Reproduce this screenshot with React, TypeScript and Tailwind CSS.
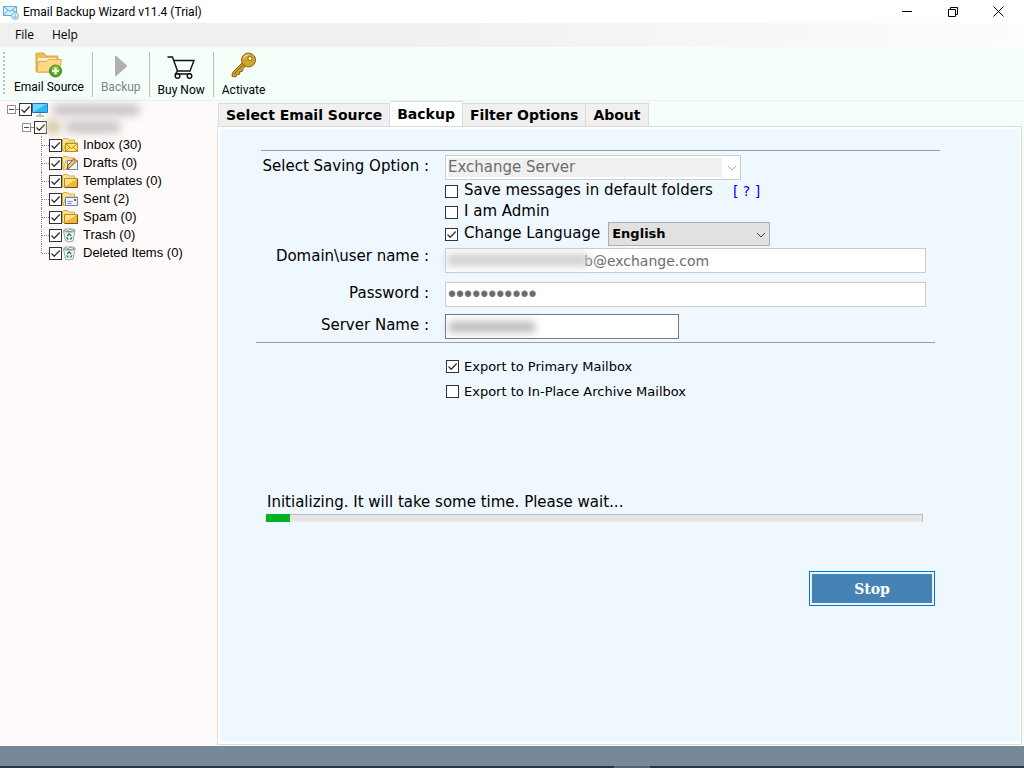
import { useState } from 'react';
import type { ReactNode } from 'react';

type FolderKind = 'inbox' | 'drafts' | 'folder' | 'sent' | 'trash';

const FOLDERS: { name: string; count: number; kind: FolderKind }[] = [
  { name: 'Inbox', count: 30, kind: 'inbox' },
  { name: 'Drafts', count: 0, kind: 'drafts' },
  { name: 'Templates', count: 0, kind: 'folder' },
  { name: 'Sent', count: 2, kind: 'sent' },
  { name: 'Spam', count: 0, kind: 'folder' },
  { name: 'Trash', count: 0, kind: 'trash' },
  { name: 'Deleted Items', count: 0, kind: 'trash' },
];

const TABS = ['Select Email Source', 'Backup', 'Filter Options', 'About'];

interface CheckProps {
  id: string;
  label?: string;
  checked?: boolean;
}

function Check({ id, label, checked = false }: CheckProps) {
  return (
    <span className="relative block size-[13px] shrink-0">
      <input
        id={id}
        type="checkbox"
        aria-label={label}
        defaultChecked={checked}
        className="peer block size-[13px] appearance-none border border-[#333] bg-white"
      />
      <svg
        viewBox="0 0 13 13"
        className="pointer-events-none invisible absolute inset-0 size-[13px] peer-checked:visible"
        fill="none"
        stroke="#333"
        strokeWidth="1.3"
      >
        <path d="M2.5 6.5 5.2 9.2 10.7 3.5" />
      </svg>
    </span>
  );
}

function AppIcon() {
  return (
    <svg width="16" height="16" viewBox="0 0 16 16" fill="none" stroke="#5aaee0">
      <path d="M.5 2.5h13v9H.5z" fill="#d8effb" />
      <path d="m.5 2.5 6.5 5 6.5-5M.5 11.5 5 6M13.5 8.5 9 6" />
      <circle cx="12" cy="12" r="3.4" fill="#fff" />
      <path d="M12 10v4m-1.7-1.7L12 14l1.7-1.7" />
    </svg>
  );
}

function SourceIcon() {
  return (
    <svg width="28" height="26" viewBox="0 0 28 26">
      <path d="M1 2q0-1 1-1h7l2 3h11q1 0 1 1v15H2q-1 0-1-1z" fill="#efbd57" stroke="#d9a441" />
      <path d="M3 6h18v3H3z" fill="#fff1c9" />
      <path d="M2 20 3.5 9.5h8l2-2h13L24 20z" fill="#ffd98a" stroke="#e0aa4a" />
      <circle cx="20.5" cy="19" r="6" fill="#57a51c" stroke="#3f8410" />
      <circle cx="20.5" cy="17.5" r="4" fill="#7cc63b" />
      <path d="M20.5 15.5v7M17 19h7" stroke="#fff" strokeWidth="2.2" />
    </svg>
  );
}

function PlayIcon() {
  return (
    <svg width="14" height="22" viewBox="0 0 14 22">
      <path d="M1 1.5Q1 0 2.5 1.2L12.5 10q1 1 0 2L2.5 20.8Q1 22 1 20.5z" fill="#b0b0b0" />
    </svg>
  );
}

function CartIcon() {
  return (
    <svg width="28" height="26" viewBox="0 0 28 26" fill="none" stroke="#111" strokeWidth="1.4">
      <path d="M.5 3h5l5 14h12.5l4-10.500H7" />
      <path d="m10.500 17-2 3h15" />
      <circle cx="10.500" cy="22" r="2.300" fill="#f5fffa" />
      <circle cx="22.500" cy="22" r="2.300" fill="#f5fffa" />
    </svg>
  );
}

function KeyIcon() {
  return (
    <svg width="26" height="26" viewBox="0 0 26 26">
      <path
        d="M11.5 10.5 1.5 20.5 1 24.5l4 .3 1-2.3 2.5-.3.5-2.5 2.5-.5.5-2.5 3-3z"
        fill="#c9a227"
        stroke="#8a6414"
      />
      <circle cx="17.5" cy="8" r="7" fill="#d0a62b" stroke="#8a6414" />
      <path d="M12.5 6.5a5.5 5.5 0 0 1 5-3.5" fill="none" stroke="#f0d774" strokeWidth="1.5" />
      <path d="m3 22 9.5-9.5" stroke="#8a6414" />
      <circle cx="19" cy="6.5" r="2" fill="#f5fffa" stroke="#8a6414" />
    </svg>
  );
}

function FolderIcon({ kind }: { kind: FolderKind }) {
  if (kind === 'trash') {
    return (
      <svg width="16" height="16" viewBox="0 0 16 16">
        <path d="m1.5 4 2 10q3.500 2 7.500 0L13 4z" fill="#eef3f7" stroke="#9aa6b2" />
        <ellipse cx="7.300" cy="3.500" rx="6" ry="2" fill="#8996a1" stroke="#b9c3cb" />
        <path d="M3.500 3.500 6 2.500l2 1 3-.5" fill="none" stroke="#fff" />
        <path d="m5.200 9 2-2.200 2 2.200M10 10.200 9 12H7.700M4.700 10.200 5.500 12h1" fill="none" stroke="#16822b" strokeWidth="1.200" />
      </svg>
    );
  }
  const light = kind !== 'folder';
  return (
    <svg width="16" height="16" viewBox="0 0 16 16">
      <path d="M.5 13.5V3l1-1.500h4L7 3h5.500v10.500z" fill="#fbe38d" stroke="#d3ac47" />
      {light ? (
        <path d="M1 14.500 4 6h11.500v8.500z" fill="#ffe9a0" stroke="#d9b14d" />
      ) : (
        <g>
          <path d="M2.500 5.500h13v9h-13z" fill="#f0b838" stroke="#c08a22" />
          <path d="M3 6h12L3 13z" fill="#ffe187" />
          <path d="M15.500 6v8.500H3" fill="none" stroke="#7a5210" />
        </g>
      )}
      {kind === 'inbox' && (
        <g stroke="#bd8b20">
          <path d="M3.500 6.500h12v8h-12z" fill="#ffe56e" />
          <path d="m3.500 6.500 6 5 6-5M3.500 14.500 8 10M15.500 14.500 11 10" fill="none" />
        </g>
      )}
      {kind === 'sent' && (
        <g>
          <path d="M3.500 6.500h12v8h-12z" fill="#eff5ff" stroke="#6c83bd" />
          <path d="M5.500 10.500h5M5.500 12.500h4" stroke="#7590cc" />
          <path d="M12 8h2v2h-2z" fill="#d93a2b" />
        </g>
      )}
      {kind === 'drafts' && (
        <g>
          <path d="M5.500 5.500h10v9h-10z" fill="#eff5ff" stroke="#6c83bd" />
          <path d="m5 14 1-4 6-6.500 2.500 2.500-6.500 6.500z" fill="#ffc94d" stroke="#333" strokeWidth=".8" />
          <path d="m11 4.500 1.500-1.500 2.500 2.500L13.500 7z" fill="#e8734f" />
        </g>
      )}
    </svg>
  );
}

function MonitorIcon() {
  return (
    <svg width="16" height="16" viewBox="0 0 16 16" className="shrink-0">
      <path d="M.5 1.5h15v9H.5z" fill="#2bb8f5" stroke="#2573b5" />
      <path d="M1 2h13L2 10H1z" fill="#74d5fc" />
      <path d="M8 11v2.5M4 14h8" stroke="#7893a5" />
    </svg>
  );
}

function Expander({ label }: { label: string }) {
  return (
    <button
      type="button"
      aria-label={label}
      aria-expanded="true"
      className="flex size-[9px] shrink-0 items-center justify-center border border-[#919191] bg-white"
    >
      <span className="h-px w-[5px] bg-[#334c99]" />
    </button>
  );
}

interface ToolProps {
  icon: ReactNode;
  label: string;
  disabled?: boolean;
}

function Tool({ icon, label, disabled }: ToolProps) {
  return (
    <button
      type="button"
      disabled={disabled}
      className="flex flex-col items-center justify-between whitespace-nowrap text-black disabled:text-[#838383]"
    >
      {icon}
      <span className="leading-4">{label}</span>
    </button>
  );
}

function ToolSeparator() {
  return <div className="h-[45px] w-px shrink-0 bg-[#bdbdbd]" />;
}

function TitleBar() {
  return (
    <header className="flex h-[23px] items-center bg-white pl-[3px] font-['Roboto','Open_Sans',sans-serif] text-xs">
      <AppIcon />
      <h1 className="ml-1 flex-1">Email Backup Wizard v11.4 (Trial)</h1>
      <div className="flex h-full items-center pr-[3px]">
        <button type="button" aria-label="Minimize" className="flex h-full w-[46px] items-center justify-center">
          <svg width="10" height="10" viewBox="0 0 10 10" stroke="#000">
            <path d="M0 4.5h10" />
          </svg>
        </button>
        <button type="button" aria-label="Restore" className="flex h-full w-[45px] items-center justify-center">
          <svg width="10" height="10" viewBox="0 0 10 10" fill="none" stroke="#000">
            <path d="M.5 2.5h7v7h-7zM2.5 2.5v-2h7v7h-2" />
          </svg>
        </button>
        <button type="button" aria-label="Close" className="flex h-full w-[46px] items-center justify-center">
          <svg width="11" height="11" viewBox="0 0 11 11" stroke="#000">
            <path d="m.5.5 10 10m0-10-10 10" />
          </svg>
        </button>
      </div>
    </header>
  );
}

function FolderTree() {
  return (
    <aside className="w-[217px] shrink-0 bg-[#fffafa] font-['Liberation_Sans',Arial,sans-serif] text-[13px] text-black">
      <div className="flex h-[17px] items-center pl-[7px]">
        <Expander label="Collapse computer" />
        <span className="mr-px w-[2px] border-t border-dotted border-[#888]" />
        <Check id="root" label="Computer" checked />
        <MonitorIcon />
        <span className="ml-1 h-3 w-[88px] rounded-full bg-[#c9c5c5] blur-[4px]" />
      </div>
      <div className="flex h-[18px] items-center pl-[22px]">
        <Expander label="Collapse mailbox" />
        <span className="mr-px w-[2px] border-t border-dotted border-[#888]" />
        <Check id="mailbox" label="Mailbox" checked />
        <span className="-ml-0.5 size-4 rounded-full bg-[#d5cba8] blur-[4px]" />
        <span className="ml-1 h-3 w-[56px] rounded-full bg-[#c9c5c5] blur-[4px]" />
      </div>
      <ul className="ml-[41px]">
        {FOLDERS.map(({ name, count, kind }) => (
          <li key={name} className="group flex h-[18px] items-center">
            <span className="h-full border-l border-dotted border-[#888] group-last:h-[9px] group-last:self-start" />
            <span className="w-[7px] border-t border-dotted border-[#888]" />
            <Check id={name} checked />
            <FolderIcon kind={kind} />
            <label htmlFor={name} className="pl-[5px]">{name} ({count})</label>
          </li>
        ))}
      </ul>
    </aside>
  );
}

function BackupForm() {
  const [language, setLanguage] = useState('English');

  return (
    <form
      className="flex-1 bg-[#eff7ff] pt-[21px] pr-[79px] pl-9 text-[15px] text-black"
      onSubmit={e => e.preventDefault()}
    >
      <hr className="ml-[5px] border-[#9a9fa5]" />
      <div className="mr-[14px] grid grid-cols-[173px_1fr] gap-x-4 pt-1">
        <label htmlFor="saving" className="pt-px text-right leading-5">Select Saving Option :</label>
        <div className="relative w-[296px]">
          <select
            id="saving"
            disabled
            className="block h-[25px] w-full appearance-none border border-[#ccc] bg-white bg-linear-to-r from-[#f0f0f0] from-94% to-white to-94% pl-0.5 text-[#6d6d6d] opacity-100 shadow-[inset_0_0_0_2px_white]"
          >
            <option>Exchange Server</option>
          </select>
          <svg width="10" height="6" viewBox="0 0 10 6" fill="none" stroke="#aaa" className="pointer-events-none absolute top-2.5 right-1">
            <path d="m1 1 4 4 4-4" />
          </svg>
        </div>

        <div className="col-start-2 flex h-[22px] items-center">
          <Check id="default-folders" />
          <label htmlFor="default-folders" className="pl-1.5">Save messages in default folders</label>
          <a href="#help" className="ml-5 text-sm text-[#0000ff]">[ ? ]</a>
        </div>
        <div className="col-start-2 flex h-5 items-center">
          <Check id="admin" />
          <label htmlFor="admin" className="pl-1.5">I am Admin</label>
        </div>
        <div className="col-start-2 flex h-6 items-center">
          <Check id="change-language" checked />
          <label htmlFor="change-language" className="pl-1.5">Change Language</label>
          <div className="relative ml-2 w-[162px]">
            <select
              aria-label="Language"
              value={language}
              onChange={e => setLanguage(e.target.value)}
              className="block h-6 w-full appearance-none border border-[#adadad] bg-[#e1e1e1] pl-[3px] text-[13px] font-bold"
            >
              <option>English</option>
              <option>German</option>
            </select>
            <svg width="10" height="6" viewBox="0 0 10 6" fill="none" stroke="#444" className="pointer-events-none absolute top-2.5 right-1">
              <path d="m1 1 4 4 4-4" />
            </svg>
          </div>
        </div>

        <label htmlFor="user" className="text-right leading-5">Domain\user name :</label>
        <div className="relative mt-0.5">
          <input
            id="user"
            type="text"
            readOnly
            defaultValue="b@exchange.com"
            className="block h-[25px] w-full border border-[#ccc] bg-white pl-[138px] text-sm text-[#6d6d6d]"
          />
          <span className="absolute top-1.5 left-0.5 h-3 w-[142px] bg-[#cfcfcf] blur-[4px]" />
        </div>

        <label htmlFor="password" className="mt-2.5 text-right leading-5">Password :</label>
        <input
          id="password"
          type="password"
          readOnly
          defaultValue="backup12345"
          className="mt-[9px] h-[25px] border border-[#ccc] bg-white pl-0.5 font-['Liberation_Sans',Arial,sans-serif] text-[23px] text-[#6d6d6d]"
        />

        <label htmlFor="server" className="mt-2 text-right leading-5">Server Name :</label>
        <div className="relative mt-[7px] w-[234px]">
          <input id="server" type="text" className="block h-[25px] w-full border border-[#7a7a7a] bg-white pl-1" />
          <span className="pointer-events-none absolute top-2 left-1 h-2.5 w-[86px] bg-[#b4b4b4] blur-[4px]" />
        </div>
      </div>
      <hr className="mt-[3px] mr-[5px] border-[#9a9fa5]" />

      <div className="mt-[11px] ml-[190px] text-[13px]">
        <div className="flex h-[25px] items-center">
          <Check id="primary" checked />
          <label htmlFor="primary" className="pl-[5px]">Export to Primary Mailbox</label>
        </div>
        <div className="flex h-[25px] items-center">
          <Check id="archive" />
          <label htmlFor="archive" className="pl-[5px]">Export to In-Place Archive Mailbox</label>
        </div>
      </div>

      <div className="mt-[87px] mr-[17px] ml-[10px]">
        <p id="progress-text" className="pl-px leading-[22px]">Initializing. It will take some time. Please wait...</p>
        <div
          role="progressbar"
          aria-labelledby="progress-text"
          aria-valuenow={4}
          className="mt-px flex h-2 border-t border-r border-[#bcbcbc] bg-[#e6e6e6]"
        >
          <div className="-mt-px w-6 bg-[#06b025]" />
        </div>
      </div>

      <div className="mt-[49px] mr-[5px] flex justify-end">
        <button
          type="button"
          className="h-[35px] w-[126px] border border-[#0078d7] bg-[#e9f3fb] p-0.5 font-['DejaVu_Serif',serif] text-sm font-bold text-white"
        >
          <span className="flex h-full items-center justify-center bg-[#4682b4]">Stop</span>
        </button>
      </div>
    </form>
  );
}

export default function App() {
  const [tab, setTab] = useState('Backup');

  return (
    <div className="flex min-h-screen flex-col bg-[#f5fffa] font-['Open_Sans','Noto_Sans',sans-serif] text-xs text-black">
      <TitleBar />
      <nav className="flex h-6 items-center gap-[18px] bg-linear-to-r from-[#f0f0f0] from-40% to-[#fdfdfd] pl-[15px]">
        <button type="button">File</button>
        <button type="button">Help</button>
      </nav>
      <div className="flex h-[54px] items-start border-b border-[#f0f0f0] pt-[5px] pl-[3px] font-['Roboto','Open_Sans',sans-serif]">
        <div className="h-[42px] border-l-2 border-dotted border-[#bdbdbd]" />
        <div className="flex h-[43px] pr-2 pl-[9px]">
          <Tool icon={<SourceIcon />} label="Email Source" />
        </div>
        <ToolSeparator />
        <div className="flex h-[43px] px-2 pt-[3px]">
          <Tool icon={<PlayIcon />} label="Backup" disabled />
        </div>
        <ToolSeparator />
        <div className="flex h-[46px] px-2 pt-0.5">
          <Tool icon={<CartIcon />} label="Buy Now" />
        </div>
        <ToolSeparator />
        <div className="flex h-[46px] px-2">
          <Tool icon={<KeyIcon />} label="Activate" />
        </div>
      </div>

      <main className="flex flex-1">
        <FolderTree />
        <section className="flex flex-1 flex-col pr-0.5 pb-px font-['DejaVu_Sans',Verdana,sans-serif]">
          <div role="tablist" className="flex h-[25px] items-end pl-px text-sm font-bold">
            {TABS.map(name => (
              <button
                key={name}
                type="button"
                role="tab"
                aria-selected={tab === name}
                onClick={() => setTab(name)}
                className="h-[23px] border border-b-0 border-l-0 border-[#dcdcdc] bg-[#f0f0f0] px-[7px] whitespace-nowrap first:border-l aria-selected:h-[25px] aria-selected:bg-white"
              >
                {name}
              </button>
            ))}
          </div>
          <div className="flex flex-1 border border-[#dcdcdc] bg-white p-0.5">
            <BackupForm />
          </div>
        </section>
      </main>

      <footer>
        <div className="h-5 bg-[#778899]" />
        <div className="flex h-0.5 bg-[#2d3340]">
          <div className="ml-[60%] w-9 bg-[#5c626c]" />
        </div>
      </footer>
    </div>
  );
}
